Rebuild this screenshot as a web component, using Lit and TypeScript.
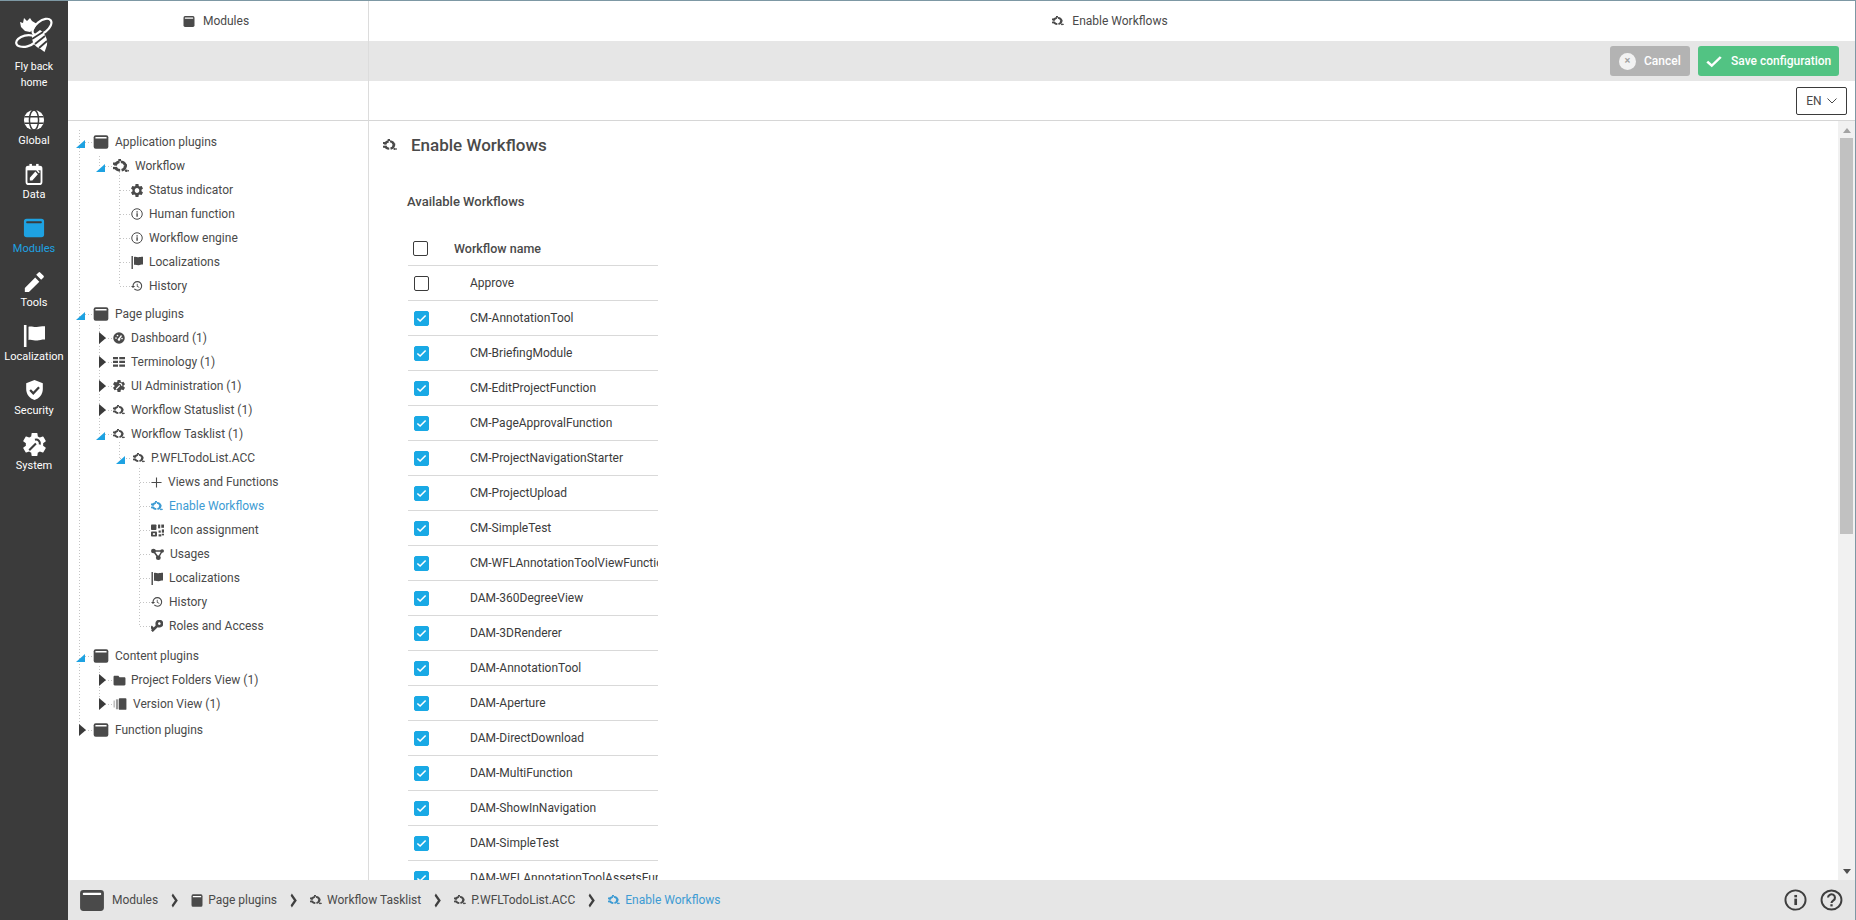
import { LitElement, html, css, svg } from "lit";
import { customElement } from "lit/decorators.js";

const GEAR = "M19.14 12.94c.04-.3.06-.61.06-.94 0-.32-.02-.64-.07-.94l2.03-1.58a.49.49 0 0 0 .12-.61l-1.92-3.32a.488.488 0 0 0-.59-.22l-2.39.96c-.5-.38-1.03-.7-1.62-.94l-.36-2.54a.484.484 0 0 0-.48-.41h-3.84c-.24 0-.43.17-.47.41l-.36 2.54c-.59.24-1.13.57-1.62.94l-2.39-.96c-.22-.08-.47 0-.59.22L2.74 8.87c-.12.21-.08.47.12.61l2.03 1.58c-.05.3-.09.63-.09.94s.02.64.07.94l-2.03 1.58a.49.49 0 0 0-.12.61l1.92 3.32c.12.22.37.29.59.22l2.39-.96c.5.38 1.03.7 1.62.94l.36 2.54c.05.24.24.41.48.41h3.84c.24 0 .44-.17.47-.41l.36-2.54c.59-.24 1.13-.56 1.62-.94l2.39.96c.22.08.47 0 .59-.22l1.92-3.32c.12-.22.07-.47-.12-.61l-2.01-1.58zM12 15.6c-1.98 0-3.6-1.62-3.6-3.6s1.62-3.6 3.6-3.6 3.6 1.62 3.6 3.6-1.62 3.6-3.6 3.6z";
const BIG = "translate(12 12) scale(1.26) translate(-12 -12)";

const PATHS: Record<string, any> = {
  window: svg`<rect x="1" y="2" width="22" height="20" rx="3" fill="currentColor"/><rect x="3.5" y="4.6" width="17" height="2.2" rx=".8" fill="var(--bar,#fff)"/>`,
  workflow: svg`<circle cx="11" cy="12" r="7.5" fill="none" stroke="currentColor" stroke-width="4.4" stroke-dasharray="9.500 2.300"/><g fill="currentColor"><rect x="0" y="6" width="4" height="4"/><rect x="0" y="13.500" width="4" height="4"/><rect x="8" y="0" width="4" height="4"/><rect x="17" y="9" width="4" height="4"/><circle cx="20" cy="20" r="2.200"/><circle cx="23.500" cy="20" r="1.300"/></g>`,
  gear: svg`<path transform=${BIG} fill="currentColor" d="${GEAR}"/>`,
  info: svg`<circle cx="12" cy="12" r="10.500" fill="none" stroke="currentColor" stroke-width="2"/><rect x="10.800" y="10.500" width="2.800" height="7" fill="currentColor"/><rect x="10.800" y="6.500" width="2.800" height="2.600" fill="currentColor"/>`,
  flag: svg`<rect x="1" y="0" width="2.800" height="24" fill="currentColor"/><path fill="currentColor" d="M6 2c3-1.400 6 .8 9 .2 2.400-.4 5-.8 9-.8v14.500c-4 0-6 .8-8.400 1-3 .3-6.600-1.600-9.600-.6z"/>`,
  history: svg`<path transform="translate(-.5 0) scale(1.08) translate(-.8 -1)" fill="currentColor" d="M13 3a9 9 0 0 0-9 9H1l3.890 3.890.07.14L9 12H6c0-3.870 3.130-7 7-7s7 3.130 7 7-3.130 7-7 7c-1.930 0-3.680-.79-4.940-2.060l-1.420 1.420A8.954 8.954 0 0 0 13 21a9 9 0 0 0 0-18zm-1 5v5l4.280 2.540.72-1.210-3.500-2.080V8H12z"/>`,
  gauge: svg`<circle cx="12" cy="12" r="11.500" fill="currentColor"/><path d="M12 14l5-7" stroke="#fff" stroke-width="2.600"/><circle cx="6" cy="12" r="1.700" fill="#fff"/><circle cx="9" cy="7" r="1.700" fill="#fff"/><circle cx="12" cy="15" r="2.600" fill="#fff"/><circle cx="18" cy="13" r="1.700" fill="#fff"/>`,
  list: svg`<g fill="currentColor"><rect x="0" y="2" width="10" height="4.500"/><rect x="12.500" y="2" width="11.500" height="4.500"/><rect x="0" y="9.500" width="10" height="4.500"/><rect x="12.500" y="9.500" width="11.500" height="4.500"/><rect x="0" y="17" width="10" height="4.500"/><rect x="12.500" y="17" width="11.500" height="4.500"/></g>`,
  cogwrench: svg`<path transform=${BIG} fill="currentColor" d="${GEAR}"/><circle cx="12" cy="12" r="6" fill="currentColor"/><path d="M6.500 18l7-7M12.500 7a4 4 0 0 1 5 5" stroke="#fff" stroke-width="2.200" fill="none"/>`,
  plus: svg`<path d="M12 1v22M1 12h22" stroke="currentColor" stroke-width="2.400"/>`,
  qr: svg`<g fill="currentColor"><rect x="0" y="1" width="10" height="10" rx="1.500"/><rect x="13" y="1" width="4" height="7"/><rect x="19" y="1" width="5" height="6"/><rect x="0" y="14" width="11" height="9" rx="1.500"/><rect x="14" y="12" width="4" height="4"/><rect x="20" y="10" width="4" height="6"/><rect x="14" y="19" width="5" height="4"/><rect x="20" y="18" width="4" height="3"/></g><rect x="3.500" y="17" width="4" height="3" fill="#fff"/>`,
  share: svg`<g fill="currentColor"><circle cx="4.500" cy="6" r="4.500"/><circle cx="20.500" cy="6" r="3.500"/><circle cx="13.500" cy="19.500" r="4.500"/></g><path d="M4.500 6h16M4.500 6l9 13.500M20.500 6l-7 13.500" stroke="currentColor" stroke-width="2.800"/>`,
  key: svg`<path transform="translate(12 12) scale(1.32) rotate(135) translate(-12 -12)" fill="currentColor" d="M12.650 10C11.830 7.670 9.610 6 7 6c-3.310 0-6 2.690-6 6s2.690 6 6 6c2.610 0 4.830-1.670 5.650-4H17v4h4v-4h2v-4H12.650zM7 14c-1.100 0-2-.9-2-2s.9-2 2-2 2 .9 2 2-.9 2-2 2z"/>`,
  folder: svg`<path fill="currentColor" d="M10 3H3C1.900 3 1 3.900 1 5v14c0 1.100.9 2 2 2h18c1.100 0 2-.9 2-2V8c0-1.100-.9-2-2-2h-9l-2-3z"/>`,
  versions: svg`<rect x="1" y="6" width="2" height="12" fill="#aaa"/><rect x="5" y="4" width="4" height="17" fill="#999"/><rect x="10" y="2" width="13" height="20" rx="1.500" fill="currentColor"/>`,
  globe: svg`<circle cx="12" cy="12" r="11" fill="currentColor"/><g fill="none" stroke="#3b3b3b" stroke-width="1.600"><ellipse cx="12" cy="12" rx="5" ry="11"/><path d="M1.500 8.500h21M1.500 15.500h21"/></g>`,
  calendar: svg`<rect x="3" y="4" width="18" height="19" rx="2" fill="none" stroke="currentColor" stroke-width="2.200"/><rect x="3" y="4" width="18" height="4" fill="currentColor"/><rect x="6.500" y="1" width="3" height="5" fill="currentColor"/><rect x="14.500" y="1" width="3" height="5" fill="currentColor"/><path fill="currentColor" d="M7 19v-3l6.600-6.600 3 3L10 19zM14.700 8.300l1.300-1.300 3 3-1.300 1.300z"/>`,
  pencil: svg`<path fill="currentColor" d="M2 18.500V23h4.500L17.800 11.700l-4.500-4.500zM22.400 7a1.200 1.200 0 0 0 0-1.700l-3.700-3.700a1.200 1.200 0 0 0-1.700 0l-2.600 2.600 5.400 5.400z"/>`,
  shield: svg`<path fill="currentColor" d="M12 1L2.500 4.500v6.500c0 5.550 4 10.600 9.500 12 5.500-1.400 9.500-6.450 9.500-12V4.500z"/><path d="M7 12l3.600 3.600L17.200 9" fill="none" stroke="#3b3b3b" stroke-width="2.600"/>`,
  wrenchgear: svg`<path transform=${BIG} fill="currentColor" d="${GEAR}"/><circle cx="12" cy="12" r="6" fill="currentColor"/><path d="M6.500 18l7-7M12.500 7a4 4 0 0 1 5 5" stroke="#3b3b3b" stroke-width="2.200" fill="none"/>`,
  check: svg`<path d="M3 13l6 6L21 6" fill="none" stroke="currentColor" stroke-width="3.400"/>`,
  chevron: svg`<path d="M6 2.500l11 9.500-11 9.500" fill="none" stroke="currentColor" stroke-width="5"/>`,
  help: svg`<circle cx="12" cy="12" r="10.400" fill="none" stroke="currentColor" stroke-width="2"/><path d="M8.400 9.400a3.600 3.600 0 1 1 5.600 3c-1.300.9-2 1.500-2 3" fill="none" stroke="currentColor" stroke-width="2.200"/><rect x="10.800" y="16.600" width="2.400" height="2.400" fill="currentColor"/>`,
};

const ic = (name: string, w = 12, h = w) =>
  html`<svg class="ic" width=${w} height=${h} viewBox="0 0 24 24" preserveAspectRatio="none" aria-hidden="true">${PATHS[name]}</svg>`;

type Row = { t: string; i: string; x: number; tx: number; w: number; h?: number; tog?: "open" | "closed"; mt?: number; active?: boolean };

const TREE: Row[] = [
  { t: "Application plugins", i: "window", x: 93, tx: 115, w: 16, h: 16, tog: "open" },
  { t: "Workflow", i: "workflow", x: 113, tx: 135, w: 16, h: 14, tog: "open" },
  { t: "Status indicator", i: "gear", x: 131, tx: 149, w: 12, h: 13 },
  { t: "Human function", i: "info", x: 131, tx: 149, w: 12 },
  { t: "Workflow engine", i: "info", x: 131, tx: 149, w: 12 },
  { t: "Localizations", i: "flag", x: 131, tx: 149, w: 12, h: 13 },
  { t: "History", i: "history", x: 131, tx: 149, w: 12 },
  { t: "Page plugins", i: "window", x: 93, tx: 115, w: 16, h: 16, tog: "open", mt: 4 },
  { t: "Dashboard (1)", i: "gauge", x: 113, tx: 131, w: 12, tog: "closed" },
  { t: "Terminology (1)", i: "list", x: 113, tx: 131, w: 12, tog: "closed" },
  { t: "UI Administration (1)", i: "cogwrench", x: 113, tx: 131, w: 12, tog: "closed" },
  { t: "Workflow Statuslist (1)", i: "workflow", x: 113, tx: 131, w: 12, h: 10, tog: "closed" },
  { t: "Workflow Tasklist (1)", i: "workflow", x: 113, tx: 131, w: 12, h: 10, tog: "open" },
  { t: "P.WFLTodoList.ACC", i: "workflow", x: 133, tx: 151, w: 12, h: 10, tog: "open" },
  { t: "Views and Functions", i: "plus", x: 151, tx: 168, w: 11 },
  { t: "Enable Workflows", i: "workflow", x: 151, tx: 169, w: 12, h: 10, active: true },
  { t: "Icon assignment", i: "qr", x: 151, tx: 170, w: 13 },
  { t: "Usages", i: "share", x: 151, tx: 170, w: 13, h: 12 },
  { t: "Localizations", i: "flag", x: 151, tx: 169, w: 12, h: 13 },
  { t: "History", i: "history", x: 151, tx: 169, w: 12 },
  { t: "Roles and Access", i: "key", x: 151, tx: 169, w: 12 },
  { t: "Content plugins", i: "window", x: 93, tx: 115, w: 16, h: 16, tog: "open", mt: 6 },
  { t: "Project Folders View (1)", i: "folder", x: 113, tx: 131, w: 13, tog: "closed" },
  { t: "Version View (1)", i: "versions", x: 113, tx: 133, w: 14, tog: "closed" },
  { t: "Function plugins", i: "window", x: 93, tx: 115, w: 16, h: 16, tog: "closed", mt: 2 },
];

const WORKFLOWS = [
  "Approve", "CM-AnnotationTool", "CM-BriefingModule", "CM-EditProjectFunction", "CM-PageApprovalFunction",
  "CM-ProjectNavigationStarter", "CM-ProjectUpload", "CM-SimpleTest", "CM-WFLAnnotationToolViewFunction",
  "DAM-360DegreeView", "DAM-3DRenderer", "DAM-AnnotationTool", "DAM-Aperture", "DAM-DirectDownload",
  "DAM-MultiFunction", "DAM-ShowInNavigation", "DAM-SimpleTest", "DAM-WFLAnnotationToolAssetsFunction",
];

const NAV = [
  { l: "Global", i: "globe", w: 22, h: 22 },
  { l: "Data", i: "calendar", w: 20, h: 22 },
  { l: "Modules", i: "window", w: 22, h: 22, on: true },
  { l: "Tools", i: "pencil", w: 22, h: 22 },
  { l: "Localization", i: "flag", w: 22, h: 22 },
  { l: "Security", i: "shield", w: 21, h: 22 },
  { l: "System", i: "wrenchgear", w: 23, h: 23 },
];

const CRUMBS = [
  { t: "Page plugins", i: "window", w: 12, h: 15 },
  { t: "Workflow Tasklist", i: "workflow", w: 12, h: 10 },
  { t: "P.WFLTodoList.ACC", i: "workflow", w: 12, h: 10 },
  { t: "Enable Workflows", i: "workflow", w: 12, h: 10, on: true },
];

// connector guides: [x1,y1,x2,y2] in the coordinates of the tree pane (origin 68,121)
const GUIDES: number[][] = [
  [11.5, 9, 11.5, 606],
  [31.5, 35, 31.5, 45],
  [31.5, 204, 31.5, 313],
  [31.5, 545, 31.5, 583],
  [51.5, 51, 51.5, 165],
  [51.5, 321, 51.5, 337],
  [71.5, 347, 71.5, 505],
  ...[21, 193, 535, 609].map((y) => [17, y + 0.5, 24, y + 0.5]),
  ...[45, 217, 241, 265, 289, 313, 559, 583].map((y) => [37, y + 0.5, 44, y + 0.5]),
  ...[69, 93, 117, 141, 165].map((y) => [52, y + 0.5, 62, y + 0.5]),
  [52, 337.5, 64, 337.5],
  ...[361, 385, 409, 433, 457, 481, 505].map((y) => [72, y + 0.5, 82, y + 0.5]),
];

@customElement("app-root")
export class AppRoot extends LitElement {
  static styles = css`
    :host {
      display: grid;
      grid-template-columns: 68px 1fr;
      width: 100vw;
      height: 100vh;
      box-sizing: border-box;
      overflow: hidden;
      border-top: 1px solid #7d98a4;
      border-right: 1px solid #7d98a4;
      font-family: Roboto, "Liberation Sans", sans-serif;
      font-size: 12px;
      color: #4a4a4a;
      background: #fff;
    }
    .ic { display: block; flex: none; }
    .side {
      background: #3b3b3b;
      color: #fff;
      display: flex;
      flex-direction: column;
      align-items: center;
      font-size: 11px;
      font-weight: 400;
      text-align: center;
    }
    .logo { margin-top: 15px; flex: none; }
    .home { font-size: 10.5px; line-height: 16px; margin-top: 6px; margin-bottom: 18px; }
    .nav {
      height: 54px;
      width: 100%;
      display: flex;
      flex-direction: column;
      align-items: center;
      justify-content: flex-start;
      gap: 3px;
      --bar: #3b3b3b;
    }
    .nav.on { color: #1ea2e2; }
    .nav span { line-height: 13px; }
    .main {
      display: grid;
      grid-template-columns: 301px 1fr;
      grid-template-rows: 40px 40px 40px minmax(0, 1fr) 40px;
      min-width: 0;
      min-height: 0;
    }
    .cell { box-sizing: border-box; display: flex; align-items: center; }
    .left { border-right: 1px solid #dcdcdc; }
    .head { justify-content: center; gap: 8px; color: #4a4a4a; padding-right: 4px; }
    .bar { background: #e6e6e6; }
    .actions { justify-content: flex-end; gap: 8px; padding-right: 16px; }
    .btn {
      height: 30px;
      border-radius: 3px;
      color: #fff;
      display: flex;
      align-items: center;
      font-weight: 500;
      box-sizing: border-box;
    }
    .cancel { background: #b3b3b3; width: 80px; padding-left: 9px; gap: 8px; }
    .cancel i {
      width: 17px; height: 17px; border-radius: 50%; background: #f2f2f2; color: #a0a0a0;
      font-style: normal; font-size: 11px; line-height: 16px; text-align: center;
    }
    .save { background: #52c383; width: 141px; padding-left: 7px; gap: 8px; }
    .langrow { border-bottom: 1px solid #d6d6d6; }
    .langs { justify-content: flex-end; padding-right: 8px; }
    .lang {
      width: 51px; height: 28px; box-sizing: border-box;
      border: 1px solid #3b3b3b; border-radius: 2px;
      display: flex; align-items: center; justify-content: center; gap: 5px;
      color: #4a4a4a;
    }
    .tree { position: relative; padding-top: 9px; overflow: hidden; }
    .guides { position: absolute; left: 0; top: 0; width: 300px; height: 760px; pointer-events: none; }
    .guides line { stroke: #c4c4c4; stroke-width: 1; stroke-dasharray: 1 2; }
    .row { position: relative; display: flex; align-items: center; height: 24px; white-space: nowrap; }
    .tog { flex: 0 0 17px; display: flex; align-items: center; }
    .tog .open { width: 0; height: 0; border-left: 9px solid transparent; border-bottom: 8px solid #1ea2e2; margin-top: 3px; }
    .tog .closed { width: 0; height: 0; border-left: 7px solid #3b3b3b; border-top: 6px solid transparent; border-bottom: 6px solid transparent; margin-left: 3px; }
    .islot { display: flex; align-items: center; flex: none; }
    .row.active { color: #3d9bd3; }
    .pane { display: flex; min-height: 0; overflow: hidden; }
    .content { flex: 1; min-width: 0; overflow: hidden; padding-left: 14px; }
    .title {
      display: flex; align-items: center; gap: 14px; height: 20px; margin-top: 14px;
      font-size: 17px; font-weight: 500; color: #4a4a4a;
    }
    .sub { margin: 39px 0 21px 24px; font-size: 13px; font-weight: 500; line-height: 16px; color: #4a4a4a; }
    .table { margin-left: 25px; width: 250px; overflow: hidden; }
    .tr {
      height: 35px; box-sizing: border-box; border-bottom: 1px solid #d9d9d9;
      display: flex; align-items: center; white-space: nowrap; padding-left: 6px; gap: 41px; color: #3b3b3b;
    }
    .tr.th { padding-left: 5px; gap: 26px; font-size: 12.5px; font-weight: 500; color: #4a4a4a; }
    .cb { flex: 0 0 15px; height: 15px; box-sizing: border-box; border: 1px solid #3b3b3b; border-radius: 2px; background: #fff; color: #fff; }
    .cb.on { background: #19a9e5; border-color: #19a9e5; display: flex; align-items: center; justify-content: center; }
    .scroll { flex: 0 0 17px; background: #f1f1f1; display: flex; flex-direction: column; align-items: center; }
    .up { margin-top: 7px; width: 0; height: 0; border: 4px solid transparent; border-top: 0; border-bottom: 5px solid #a3a3a3; }
    .thumb { margin-top: 5px; width: 13px; height: 396px; background: #c1c1c1; }
    .dn { margin-top: auto; margin-bottom: 6px; width: 0; height: 0; border: 4px solid transparent; border-bottom: 0; border-top: 5px solid #505050; }
    .foot {
      grid-column: 1 / -1; background: #e6e6e6; display: flex; align-items: center;
      padding-left: 11px; color: #4a4a4a; white-space: nowrap;
    }
    .foot .root { margin-right: 7px; }
    .crumb { display: flex; align-items: center; gap: 5px; }
    .crumb.on { color: #3d9bd3; }
    .sep { margin: 0 12px; color: #3f3f3f; }
    .help { margin-left: auto; display: flex; gap: 13px; padding-right: 12px; color: #3f3f3f; }
  `;

  private logo() {
    return html`<svg class="logo" width="38" height="37" viewBox="0 0 38 37" fill="none" aria-hidden="true">
      <g stroke="#fff" stroke-width="2.2">
        <ellipse cx="27" cy="11" rx="11" ry="6" transform="rotate(-38 27 11)"/>
        <ellipse cx="11" cy="25" rx="10" ry="5.6" transform="rotate(-14 11 25)"/>
      </g>
      <path fill="#fff" d="M5 6l3 1 1-5 3 3 3-3 2 3 5 3-3 5-4 3-5-1-4-4z"/>
      <path fill="#fff" d="M17 20l8-6c5 3 8 9 7 15l-1 3-1.5 4-4-3c-6-2-9-8-8.500-13z"/>
      <path stroke="#3b3b3b" stroke-width="1.8" d="M17 23l11-7M20 28l10-8M24 32l8-7"/>
    </svg>`;
  }

  private row(r: Row) {
    const pad = r.x - 68 - (r.tog ? 17 : 0);
    return html`<div class="row ${r.active ? "active" : ""}" style="padding-left:${pad}px;margin-top:${r.mt ?? 0}px">
      ${r.tog ? html`<span class="tog"><span class=${r.tog}></span></span>` : ""}
      <span class="islot" style="width:${r.tx - r.x}px">${ic(r.i, r.w, r.h ?? r.w)}</span>
      <span>${r.t}</span>
    </div>`;
  }

  render() {
    return html`
      <aside class="side">
        ${this.logo()}
        <div class="home">Fly back<br />home</div>
        ${NAV.map(
          (n) => html`<div class="nav ${n.on ? "on" : ""}">${ic(n.i, n.w, n.h)}<span>${n.l}</span></div>`
        )}
      </aside>
      <div class="main">
        <div class="cell left head">${ic("window", 12, 13)}<span>Modules</span></div>
        <div class="cell head">${ic("workflow", 12, 10)}<span>Enable Workflows</span></div>
        <div class="cell left bar"></div>
        <div class="cell bar actions">
          <div class="btn cancel"><i>×</i><span>Cancel</span></div>
          <div class="btn save">${ic("check", 18, 16)}<span>Save configuration</span></div>
        </div>
        <div class="cell left langrow"></div>
        <div class="cell langrow langs">
          <div class="lang"><span>EN</span>${html`<svg width="10" height="6" viewBox="0 0 10 6" fill="none" aria-hidden="true"><path d="M.5.5L5 5 9.500.5" stroke="#4a4a4a"/></svg>`}</div>
        </div>
        <nav class="tree left">
          <svg class="guides" aria-hidden="true">
            ${GUIDES.map((g) => svg`<line x1=${g[0]} y1=${g[1]} x2=${g[2]} y2=${g[3]}></line>`)}
          </svg>
          ${TREE.map((r) => this.row(r))}
        </nav>
        <div class="pane">
          <div class="content">
            <div class="title">${ic("workflow", 14, 12)}<span>Enable Workflows</span></div>
            <div class="sub">Available Workflows</div>
            <div class="table">
              <div class="tr th"><span class="cb"></span><span>Workflow name</span></div>
              ${WORKFLOWS.map(
                (w, i) => html`<div class="tr">
                  <span class="cb ${i > 0 ? "on" : ""}">${i > 0 ? ic("check", 11, 10) : ""}</span><span>${w}</span>
                </div>`
              )}
            </div>
          </div>
          <div class="scroll"><span class="up"></span><span class="thumb"></span><span class="dn"></span></div>
        </div>
        <footer class="foot">
          <span class="root">${ic("window", 26, 25)}</span>
          <span class="crumb">Modules</span>
          ${CRUMBS.map(
            (c) => html`<span class="sep">${ic("chevron", 9, 15)}</span>
              <span class="crumb ${c.on ? "on" : ""}">${ic(c.i, c.w, c.h)}<span>${c.t}</span></span>`
          )}
          <div class="help">${ic("info", 23, 22)}${ic("help", 23, 22)}</div>
        </footer>
      </div>
    `;
  }
}
